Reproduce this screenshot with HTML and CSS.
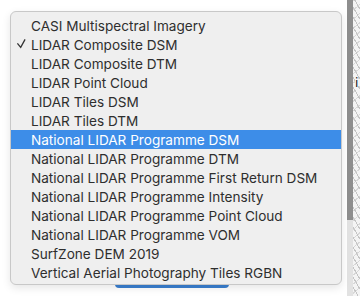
FILE: index.html
```html
<!doctype html>
<html lang="en">
<head>
    <meta charset="UTF-8">
    <title>Layer menu</title>
    <link rel="stylesheet" href="styles.css">
</head>
<body>
    <div class="main">
        <!-- button partly hidden under the menu -->
        <div class="btn-under"></div>

        <ul class="menu">
            <li class="item"><span class="check"></span>CASI Multispectral Imagery</li>
            <li class="item">
                <span class="check">
                    <svg width="20" height="19" viewBox="0 0 20 19"><path d="M6.4 8.4 L9.7 12.3 L14.1 4.4" fill="none" stroke="#333" stroke-width="1.3"/></svg>
                </span>LIDAR Composite DSM
            </li>
            <li class="item"><span class="check"></span>LIDAR Composite DTM</li>
            <li class="item"><span class="check"></span>LIDAR Point Cloud</li>
            <li class="item"><span class="check"></span>LIDAR Tiles DSM</li>
            <li class="item"><span class="check"></span>LIDAR Tiles DTM</li>
            <li class="item active"><span class="check"></span>National LIDAR Programme DSM</li>
            <li class="item"><span class="check"></span>National LIDAR Programme DTM</li>
            <li class="item"><span class="check"></span>National LIDAR Programme First Return DSM</li>
            <li class="item"><span class="check"></span>National LIDAR Programme Intensity</li>
            <li class="item"><span class="check"></span>National LIDAR Programme Point Cloud</li>
            <li class="item"><span class="check"></span>National LIDAR Programme VOM</li>
            <li class="item"><span class="check"></span>SurfZone DEM 2019</li>
            <li class="item"><span class="check"></span>Vertical Aerial Photography Tiles RGBN</li>
        </ul>
    </div>

    <!-- Полоса прокрутки -->
    <div class="scrollbar">
        <div class="thumb"></div>
    </div>

    <!-- Кусок карты -->
    <div class="map">
        <span class="map-label">i</span>
    </div>
</body>
</html>
```
FILE: styles.css
```css
body, html {
    margin: 0;
    padding: 0;
    height: 100%;
    background: #fff;
    overflow: hidden;
}

body {
    display: flex;
    font-family: Inter, "Noto Sans", sans-serif;
}

/* Левая часть с меню */
.main {
    position: relative;
    width: 347px;
    padding: 11px 0 0 10px;
    box-sizing: border-box;
}

.btn-under {
    position: absolute;
    left: 115px;
    top: 270px;
    width: 114px;
    height: 18px;
    background: #3a7fd0;
    border-radius: 4px;
}

/* Выпадающий список */
.menu {
    position: relative;
    list-style: none;
    margin: 0;
    padding: 4px 0 2px;
    width: 332px;
    box-sizing: border-box;
    background: #efefef;
    border: 1px solid #c8c8c8;
    border-radius: 6px;
    box-shadow: 0 3px 9px rgba(0, 0, 0, 0.1);
}

.item {
    display: flex;
    align-items: center;
    height: 19px;
    font-size: 13.6px;
    color: #2e2e2e;
    white-space: nowrap;
}

.check {
    display: flex;
    width: 20px;
    height: 19px;
}

.item.active {
    background: #3d8de8;
    color: #fff;
}

/* Скроллбар */
.scrollbar {
    width: 6px;
    background: #e2e2e2;
}

.thumb {
    height: 220px;
    background: #8e8e8e;
}

.map {
    flex-grow: 1;
    position: relative;
    background-color: #f4f4f4;
    background-image:
        repeating-linear-gradient(60deg, transparent 0 4px, #c4c4c4 4px 5px),
        repeating-linear-gradient(-40deg, transparent 0 6px, #d8d8d8 6px 7px);
}

.map-label {
    position: absolute;
    left: 2px;
    top: 76px;
    font-size: 12px;
    color: #111;
    background: #f4f4f4;
    font-family: "DejaVu Sans", sans-serif;
}
```
